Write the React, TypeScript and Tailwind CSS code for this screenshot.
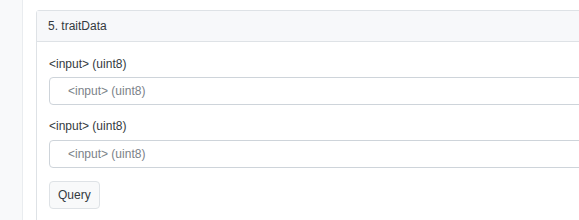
export default function App() {
  return (
    <div className="flex h-[220px] w-[579px] overflow-hidden bg-white font-['Liberation_Sans',Arial,sans-serif] text-[#212529]">
      <div className="w-[23px] shrink-0 border-r border-[#e9ecef] bg-[#f8f9fa]"></div>
      <div className="flex-1 overflow-hidden pl-[13px] pt-[10px]">
        <div className="w-[600px] rounded-tl-[3px] border border-[#dee2e6]">
          <div className="flex h-[31px] items-center border-b border-[#dee2e6] bg-[#f7f8fa] px-[11px] text-[12px] text-[#343a40]">
            5. traitData
          </div>
          <div className="px-[12px] pb-[14px] pt-[15px]">
            <label className="mb-[6px] block text-[12px] leading-[14px] text-[#343a40]">&lt;input&gt; (uint8)</label>
            <input
              className="block h-[28px] w-full rounded-[4px] border border-[#ced4da] pl-[18px] text-[12px] outline-none placeholder:text-[#7b8289]"
              placeholder="<input> (uint8)"
            />
            <label className="mb-[7px] mt-[14px] block text-[12px] leading-[14px] text-[#343a40]">&lt;input&gt; (uint8)</label>
            <input
              className="block h-[28px] w-full rounded-[4px] border border-[#ced4da] pl-[18px] text-[12px] outline-none placeholder:text-[#7b8289]"
              placeholder="<input> (uint8)"
            />
            <button className="mt-[13px] h-[28px] rounded-[4px] border border-[#dee2e6] bg-[#f8f9fa] px-[8px] text-[12px] text-[#343a40]">
              Query
            </button>
          </div>
        </div>
      </div>
    </div>
  );
}
